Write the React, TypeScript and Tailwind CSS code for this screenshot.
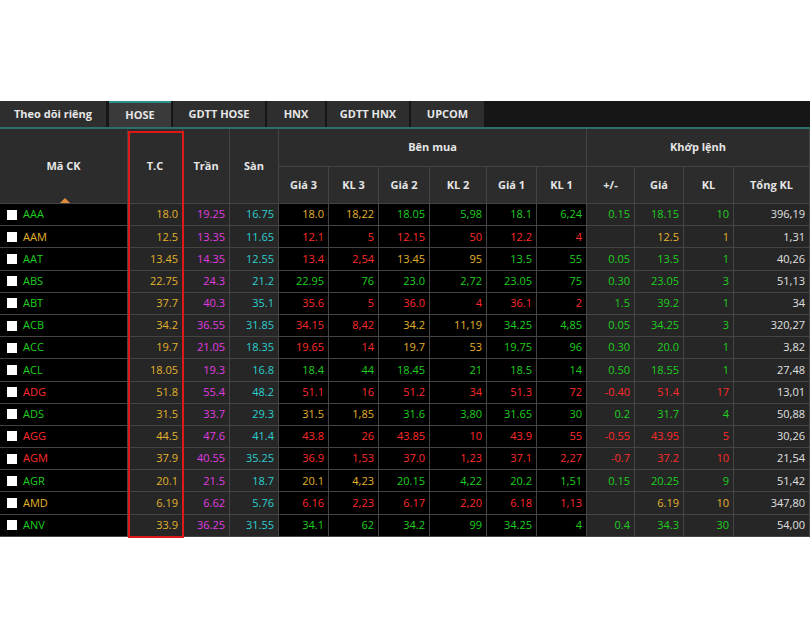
import React from "react";

type Cell = [string, string];
const C: Record<string, string> = {
  y: "text-[#e3b32c]",
  g: "text-[#1fcf1f]",
  r: "text-[#ff2a2a]",
  m: "text-[#e03ce0]",
  c: "text-[#2ccfcf]",
  w: "text-[#e0e0e0]",
};

const raw: [string, string, string, string, string, string][] = [
  ["AAA", "g", "18.0 19.25 16.75", "18.0:y 18,22:y 18.05:g 5,98:g 18.1:g 6,24:g", "0.15:g 18.15:g 10:g", "396,19"],
  ["AAM", "y", "12.5 13.35 11.65", "12.1:r 5:r 12.15:r 50:r 12.2:r 4:r", "_:y 12.5:y 1:y", "1,31"],
  ["AAT", "g", "13.45 14.35 12.55", "13.4:r 2,54:r 13.45:y 95:y 13.5:g 55:g", "0.05:g 13.5:g 1:g", "40,26"],
  ["ABS", "g", "22.75 24.3 21.2", "22.95:g 76:g 23.0:g 2,72:g 23.05:g 75:g", "0.30:g 23.05:g 3:g", "51,13"],
  ["ABT", "g", "37.7 40.3 35.1", "35.6:r 5:r 36.0:r 4:r 36.1:r 2:r", "1.5:g 39.2:g 1:g", "34"],
  ["ACB", "g", "34.2 36.55 31.85", "34.15:r 8,42:r 34.2:y 11,19:y 34.25:g 4,85:g", "0.05:g 34.25:g 3:g", "320,27"],
  ["ACC", "g", "19.7 21.05 18.35", "19.65:r 14:r 19.7:y 53:y 19.75:g 96:g", "0.30:g 20.0:g 1:g", "3,82"],
  ["ACL", "g", "18.05 19.3 16.8", "18.4:g 44:g 18.45:g 21:g 18.5:g 14:g", "0.50:g 18.55:g 1:g", "27,48"],
  ["ADG", "r", "51.8 55.4 48.2", "51.1:r 16:r 51.2:r 34:r 51.3:r 72:r", "-0.40:r 51.4:r 17:r", "13,01"],
  ["ADS", "g", "31.5 33.7 29.3", "31.5:y 1,85:y 31.6:g 3,80:g 31.65:g 30:g", "0.2:g 31.7:g 4:g", "50,88"],
  ["AGG", "r", "44.5 47.6 41.4", "43.8:r 26:r 43.85:r 10:r 43.9:r 55:r", "-0.55:r 43.95:r 5:r", "30,26"],
  ["AGM", "r", "37.9 40.55 35.25", "36.9:r 1,53:r 37.0:r 1,23:r 37.1:r 2,27:r", "-0.7:r 37.2:r 10:r", "21,54"],
  ["AGR", "g", "20.1 21.5 18.7", "20.1:y 4,23:y 20.15:g 4,22:g 20.2:g 1,51:g", "0.15:g 20.25:g 9:g", "51,42"],
  ["AMD", "y", "6.19 6.62 5.76", "6.16:r 2,23:r 6.17:r 2,20:r 6.18:r 1,13:r", "_:y 6.19:y 10:y", "347,80"],
  ["ANV", "g", "33.9 36.25 31.55", "34.1:g 62:g 34.2:g 99:g 34.25:g 4:g", "0.4:g 34.3:g 30:g", "54,00"],
];

const parse = (s: string): Cell[] =>
  s.split(" ").map((p) => {
    const [v, c] = p.split(":");
    return [v === "_" ? "" : v, c];
  });

const widths = [128, 55, 47, 49, 50, 50, 51, 57, 50, 50, 48, 49, 50, 76];
const bd = "border-r border-b border-[#444]";

export default function App() {
  return (
    <div className="w-[810px] h-[640px] bg-white relative" style={{ fontFamily: '"Open Sans", "Noto Sans", sans-serif' }}>
      <div className="pt-[101px]">
        <div className="flex h-[28px] bg-[#161616] border-b-[2px] border-[#2a6f6c] text-[11px] font-bold text-[#e6e6e6]">
          <div className="w-[106px] bg-[#2e2e2e] flex items-center justify-center mr-[3px]">Theo dõi riêng</div>
          <div className="w-[62px] bg-[#3a3a3a] border-t-2 border-[#2a8f8a] flex items-center justify-center mr-[2px]">HOSE</div>
          <div className="w-[92px] bg-[#2e2e2e] flex items-center justify-center mr-[2px]">GDTT HOSE</div>
          <div className="w-[58px] bg-[#2e2e2e] flex items-center justify-center mr-[2px]">HNX</div>
          <div className="w-[82px] bg-[#2e2e2e] flex items-center justify-center mr-[2px]">GDTT HNX</div>
          <div className="w-[73px] bg-[#2e2e2e] flex items-center justify-center">UPCOM</div>
        </div>
        <div className="bg-[#2c2c2c] text-[11px] font-bold text-[#e6e6e6]">
          <div className="flex h-[75px]">
            {[["Mã CK", 0], ["T.C", 1], ["Trần", 2], ["Sàn", 3]].map(([t, i]) => (
              <div key={t as string} style={{ width: widths[i as number] }} className={`${bd} flex items-center justify-center relative`}>
                {t}
                {i === 0 && <div className="absolute bottom-0 left-[60px] w-0 h-0 border-l-[5px] border-r-[5px] border-b-[5px] border-l-transparent border-r-transparent border-b-[#e08a3a]" />}
              </div>
            ))}
            <div className="flex flex-col">
              <div className={`${bd} h-[38px] w-[308px] flex items-center justify-center`}>Bên mua</div>
              <div className="flex h-[37px]">
                {["Giá 3", "KL 3", "Giá 2", "KL 2", "Giá 1", "KL 1"].map((t, k) => (
                  <div key={t} style={{ width: widths[4 + k] }} className={`${bd} flex items-center justify-center`}>{t}</div>
                ))}
              </div>
            </div>
            <div className="flex flex-col">
              <div className={`${bd} h-[38px] w-[223px] flex items-center justify-center`}>Khớp lệnh</div>
              <div className="flex h-[37px]">
                {["+/-", "Giá", "KL", "Tổng KL"].map((t, k) => (
                  <div key={t} style={{ width: widths[10 + k] }} className={`${bd} flex items-center justify-center`}>{t}</div>
                ))}
              </div>
            </div>
          </div>
        </div>
        <div className="text-[11px]">
          {raw.map(([code, cc, ref, bid, match, tot]) => {
            const refs = ref.split(" ");
            const cells: { v: string; c: string; bg: string }[] = [
              { v: refs[0], c: "y", bg: "bg-[#262626]" },
              { v: refs[1], c: "m", bg: "bg-[#262626]" },
              { v: refs[2], c: "c", bg: "bg-[#262626]" },
              ...parse(bid).map(([v, c]) => ({ v, c, bg: "bg-black" })),
              ...parse(match).map(([v, c]) => ({ v, c, bg: "bg-[#262626]" })),
              { v: tot, c: "w", bg: "bg-[#262626]" },
            ];
            return (
              <div key={code} className="flex h-[22.2px]">
                <div style={{ width: widths[0] }} className={`${bd} bg-black flex items-center pl-[7px] gap-[6px]`}>
                  <div className="w-[10px] h-[10px] bg-white" />
                  <span className={C[cc]}>{code}</span>
                </div>
                {cells.map((x, k) => (
                  <div key={k} style={{ width: widths[k + 1] }} className={`${bd} ${x.bg} ${C[x.c]} flex items-center justify-end pr-[4px]`}>{x.v}</div>
                ))}
              </div>
            );
          })}
        </div>
      </div>
      <div className="absolute left-[128px] top-[131px] w-[56px] h-[407px] border-2 border-[#e01818]" />
    </div>
  );
}
